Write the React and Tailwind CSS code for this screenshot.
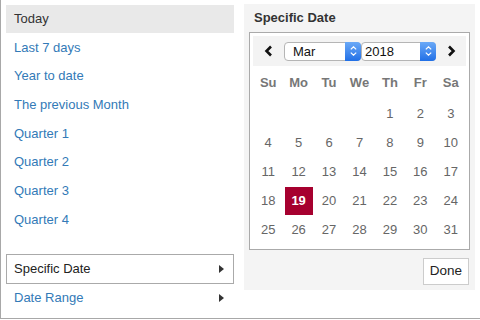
import React from "react";

const presets = [
  "Last 7 days",
  "Year to date",
  "The previous Month",
  "Quarter 1",
  "Quarter 2",
  "Quarter 3",
  "Quarter 4",
];

const dayNames = ["Su", "Mo", "Tu", "We", "Th", "Fr", "Sa"];

// March 2018 starts on a Thursday
const cells = [
  ...Array(4).fill(null),
  ...Array.from({ length: 31 }, (_, i) => i + 1),
];

function Caret() {
  return (
    <svg width="5" height="8" viewBox="0 0 5 8" className="mr-[9px]">
      <polygon points="0,0 5,4 0,8" fill="#333" />
    </svg>
  );
}

function Chevron({ dir }) {
  return (
    <svg width="10" height="12" viewBox="0 0 10 12">
      <polyline
        points={dir === "left" ? "7,1.5 2.5,6 7,10.5" : "3,1.5 7.5,6 3,10.5"}
        fill="none"
        stroke="#111"
        strokeWidth="2.6"
      />
    </svg>
  );
}

function FakeSelect({ value, width, indent }) {
  return (
    <div
      className={`flex h-[19px] items-center rounded-[4px] border border-[#b5b5b5] bg-white ${width}`}
    >
      <span className={`flex-1 text-[13px] leading-none text-[#111] ${indent}`}>{value}</span>
      <div className="flex h-[19px] w-[16px] -mr-px -my-px flex-col items-center justify-center gap-[2px] rounded-r-[4px] bg-gradient-to-b from-[#6aa9f7] to-[#1f6fe6]">
        <svg width="7" height="4" viewBox="0 0 7 4">
          <polyline points="0.8,3.4 3.5,0.8 6.2,3.4" fill="none" stroke="#fff" strokeWidth="1.2" />
        </svg>
        <svg width="7" height="4" viewBox="0 0 7 4">
          <polyline points="0.8,0.6 3.5,3.2 6.2,0.6" fill="none" stroke="#fff" strokeWidth="1.2" />
        </svg>
      </div>
    </div>
  );
}

export default function App() {
  return (
    <div className="h-[320px] w-[480px] overflow-hidden bg-white font-['Liberation_Sans',Arial,sans-serif] text-[13px]">
      <div className="flex h-[319px] border-b border-l border-[#a8a8a8] pl-[5px]">
        {/* left: presets */}
        <div className="flex w-[228px] flex-col pt-[5px]">
          <div className="flex h-[28px] items-center bg-[#e9e9e9] pl-[8px] text-[#333]">Today</div>
          {presets.map((p) => (
            <div key={p} className="flex h-[28.7px] items-center pl-[8px] text-[#337ab7]">
              {p}
            </div>
          ))}
          <div className="mt-[20px] flex h-[30px] items-center justify-between border border-[#aaa] pl-[7px] text-[#222]">
            <span>Specific Date</span>
            <Caret />
          </div>
          <div className="flex h-[28px] items-center justify-between pl-[8px] text-[#337ab7]">
            <span>Date Range</span>
            <span className="mr-px">
              <Caret />
            </span>
          </div>
        </div>

        {/* right: calendar panel */}
        <div className="ml-[10px] mt-[4px] flex h-[286px] w-[231px] flex-col bg-[#f4f4f4] px-[5px] pb-[5px]">
          <div className="flex h-[28px] items-center pl-[5px] font-bold text-[#333]">Specific Date</div>
          <div className="border border-[#aaa] bg-white px-[3px] pb-[5px] pt-[3px]">
            <div className="flex h-[30px] items-center bg-[#f3f3f3]">
              <div className="flex w-[31px] justify-center">
                <Chevron dir="left" />
              </div>
              <FakeSelect value="Mar" width="w-[77px]" indent="pl-[8px]" />
              <FakeSelect value="2018" width="w-[75px]" indent="pl-[3px]" />
              <div className="flex flex-1 justify-center">
                <Chevron dir="right" />
              </div>
            </div>
            <div className="grid grid-cols-7">
              {dayNames.map((d) => (
                <div key={d} className="flex h-[33px] items-center justify-center font-bold text-[#777]">
                  {d}
                </div>
              ))}
              {cells.map((d, i) => (
                <div key={i} className="flex h-[29px] items-center justify-center">
                  {d === 19 ? (
                    <span className="flex h-[28px] w-[28px] items-center justify-center bg-[#a6002f] font-bold text-white">
                      19
                    </span>
                  ) : (
                    <span className="text-[#666]">{d}</span>
                  )}
                </div>
              ))}
            </div>
          </div>
          <div className="mt-[8px] flex justify-end">
            <button className="mr-px h-[27px] w-[46px] border border-[#ccc] bg-white text-[13.5px] text-[#222]">
              Done
            </button>
          </div>
        </div>
      </div>
    </div>
  );
}
